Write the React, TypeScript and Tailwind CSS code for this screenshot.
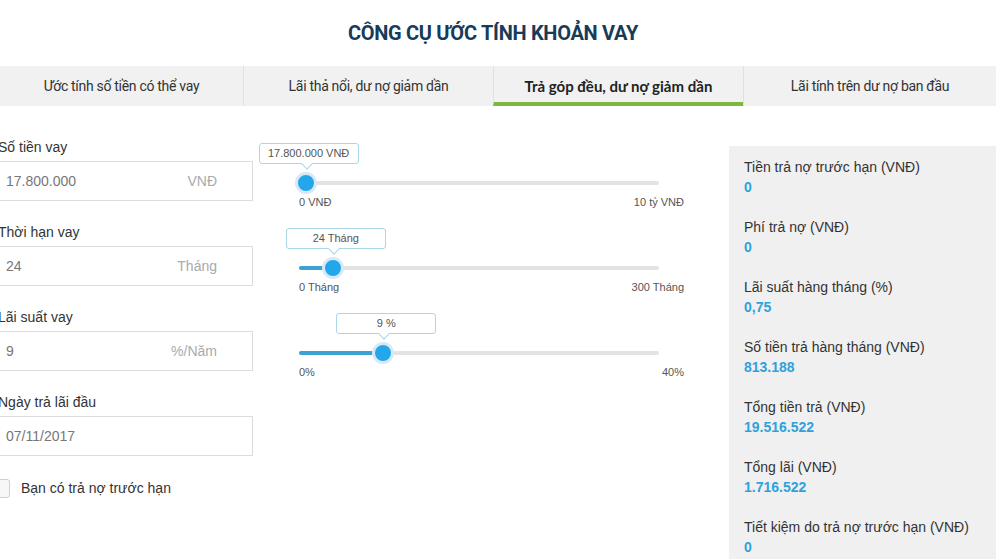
import React from 'react';

const tabs = [
    { text: 'Ước tính số tiền có thể vay', w: 'w-[243px]' },
    { text: 'Lãi thả nổi, dư nợ giảm dần', w: 'w-[250px]' },
    { text: 'Trả góp đều, dư nợ giảm dần', w: 'w-[250px]' },
    { text: 'Lãi tính trên dư nợ ban đầu', w: 'flex-1' },
];
const activeTab = 2;

const fields = [
    { label: 'Số tiền vay', value: '17.800.000', unit: 'VNĐ' },
    { label: 'Thời hạn vay', value: '24', unit: 'Tháng' },
    { label: 'Lãi suất vay', value: '9', unit: '%/Năm' },
    { label: 'Ngày trả lãi đầu', value: '07/11/2017', unit: '' },
];

const sliders = [
    { tip: '17.800.000 VNĐ', frac: 17800000 / 10000000000, min: '0 VNĐ', max: '10 tỷ VNĐ' },
    { tip: '24 Tháng', frac: 24 / 300, min: '0 Tháng', max: '300 Tháng' },
    { tip: '9 %', frac: 9 / 40, min: '0%', max: '40%' },
];

const results = [
    { label: 'Tiền trả nợ trước hạn (VNĐ)', value: '0' },
    { label: 'Phí trả nợ (VNĐ)', value: '0' },
    { label: 'Lãi suất hàng tháng (%)', value: '0,75' },
    { label: 'Số tiền trả hàng tháng (VNĐ)', value: '813.188' },
    { label: 'Tổng tiền trả (VNĐ)', value: '19.516.522' },
    { label: 'Tổng lãi (VNĐ)', value: '1.716.522' },
    { label: 'Tiết kiệm do trả nợ trước hạn (VNĐ)', value: '0' },
];

const Slider = ({ tip, frac, min, max }: { tip: string; frac: number; min: string; max: string }) => {
    const center = 6 + frac * 348;
    return (
        <div className="h-[85px] w-[385px] pt-[27px]">
            <div className="relative h-[20px] w-[360px]">
                <div className="absolute left-0 right-0 top-[8px] h-[4px] rounded-full bg-[#e3e3e3]" />
                <div className="absolute left-0 top-[8px] h-[4px] rounded-full bg-[#3aa3d4]" style={{ width: center }} />
                <div
                    className="absolute top-0 w-[22px] h-[22px] -mt-[1px] rounded-full bg-[#24a6eb] border-[3px] border-[#d6e9f5]"
                    style={{ left: center - 11 }}
                />
                <div
                    className="absolute top-[-30px] w-[100px] h-[21px] flex items-center justify-center rounded-[3px] border border-[#a9d7e8] bg-white text-[11px] text-[#555]"
                    style={{ left: center - 47 }}
                >
                    {tip}
                    <div className="absolute left-[43px] bottom-[-5px] w-[8px] h-[8px] rotate-45 bg-white border-r border-b border-[#a9d7e8]" />
                </div>
            </div>
            <div className="flex justify-between mt-[2px] text-[11px] leading-[14px] text-[#555]">
                <span>{min}</span>
                <span>{max}</span>
            </div>
        </div>
    );
};

export default function App() {
    return (
        <div className="w-[996px] h-[559px] overflow-hidden bg-white text-[#333]" style={{ fontFamily: '"Liberation Sans", Arial, sans-serif' }}>
            <div className="h-[66px] flex items-center justify-center">
                <h1
                    className="text-[20px] font-bold text-[#173b58] tracking-[-0.3px] mr-[10px]"
                    style={{ fontFamily: 'Roboto, "Liberation Sans", sans-serif' }}
                >
                    CÔNG CỤ ƯỚC TÍNH KHOẢN VAY
                </h1>
            </div>

            <div className="flex h-[40px] bg-[#f1f1f1]">
                {tabs.map((t, i) => (
                    <div
                        key={t.text}
                        className={`${t.w} flex items-center justify-center text-[14px] border-l border-[#e0e0e0] first:border-l-0 ${
                            i === activeTab ? 'border-b-[4px] border-b-[#7db73e] pt-[4px] text-[15px] font-bold text-[#222]' : 'text-[#333]'
                        }`}
                        style={{
                            fontFamily: i === activeTab ? 'Lato, "Open Sans", sans-serif' : 'Roboto, "Liberation Sans", sans-serif',
                            letterSpacing: i === activeTab ? '0' : '-0.3px',
                        }}
                    >
                        {t.text}
                    </div>
                ))}
            </div>

            <div className="flex">
                <div className="w-[261px] -ml-[8px] pt-[33px] flex flex-col">
                    {fields.map((f) => (
                        <div key={f.label} className="h-[85px]">
                            <div className="ml-[6px] h-[16px] text-[14px] leading-[16px]">{f.label}</div>
                            <div className="mt-[6px] h-[40px] border border-[#dcdcdc] flex items-center justify-between pl-[13px] pr-[35px] text-[14px]">
                                <span className="text-[#777]">{f.value}</span>
                                <span className="text-[#aaa]">{f.unit}</span>
                            </div>
                        </div>
                    ))}
                    <div className="flex items-center gap-[11px] mt-[-1px]">
                        <div className="w-[18px] h-[19px] rounded-[3px] border border-[#cfcfcf] bg-[#f7f7f7]" />
                        <span className="text-[14px]">Bạn có trả nợ trước hạn</span>
                    </div>
                </div>

                <div className="ml-[46px] pt-[40px]">
                    {sliders.map((s) => (
                        <Slider key={s.tip} {...s} />
                    ))}
                </div>

                <div className="ml-[45px] mt-[40px] flex-1 bg-[#f0f0f0] pl-[15px] pt-[13px] h-[500px]">
                    {results.map((r) => (
                        <div key={r.label} className="h-[60px]">
                            <div className="text-[14px] leading-[16px]">{r.label}</div>
                            <div className="mt-[4px] text-[14px] leading-[16px] font-bold text-[#2fa2dc]">{r.value}</div>
                        </div>
                    ))}
                </div>
            </div>
        </div>
    );
}
